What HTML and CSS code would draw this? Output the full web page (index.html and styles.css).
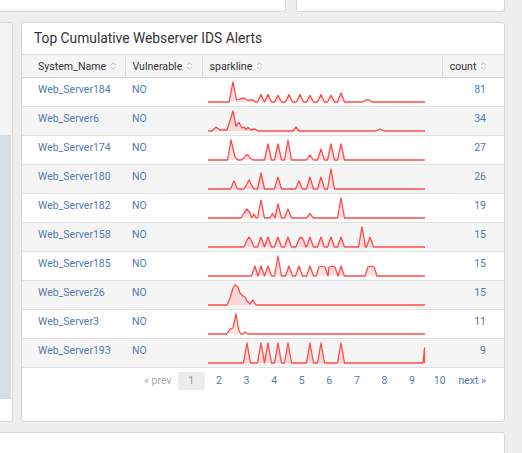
FILE: index.html
```html
<!DOCTYPE html>
<html>
<head>
<meta charset="utf-8">
<link rel="stylesheet" href="styles.css">
</head>
<body>
<div class="top-row">
  <div class="panel top-a"></div>
  <div class="panel top-b"></div>
</div>
<div class="mid-row">
  <div class="panel side">
    <div class="side-a"></div>
    <div class="side-b"></div>
  </div>
  <div class="panel main">
    <h2 class="title">Top Cumulative Webserver IDS Alerts</h2>
    <table class="grid">
      <colgroup><col class="c1"><col class="c2"><col class="c3"><col class="c4"></colgroup>
      <thead>
        <tr>
          <th class="first">System_Name <svg class="sort" viewBox="0 0 7 10"><path d="M1.2 4 L3.5 1.6 L5.8 4 M1.2 6 L3.5 8.4 L5.8 6"/></svg></th>
          <th>Vulnerable <svg class="sort" viewBox="0 0 7 10"><path d="M1.2 4 L3.5 1.6 L5.8 4 M1.2 6 L3.5 8.4 L5.8 6"/></svg></th>
          <th>sparkline <svg class="sort" viewBox="0 0 7 10"><path d="M1.2 4 L3.5 1.6 L5.8 4 M1.2 6 L3.5 8.4 L5.8 6"/></svg></th>
          <th class="num">count <svg class="sort" viewBox="0 0 7 10"><path d="M1.2 4 L3.5 1.6 L5.8 4 M1.2 6 L3.5 8.4 L5.8 6"/></svg></th>
        </tr>
      </thead>
      <tbody>
        <tr>
          <td class="first">Web_Server184</td><td>NO</td>
          <td class="spark"><svg viewBox="0 0 217 22"><polyline points="0,21 21,21 25,1 28.5,19 32,18 36,17 40,19.5 44,18.6 47.5,21 49.5,21 53,13.4 56.5,21 60,13.4 63.5,21 66.5,21 70,14.4 73.5,21 77.5,21 81,13.4 84.5,21 88.5,21 92,13.4 95.5,21 98.5,21 102,14.4 105.5,21 109.5,21 113,13.4 116.5,21 119.5,21 123,14.4 126.5,21 129.5,21 133,12 136.5,21 155,21 158,18.8 161,18.8 164,21 217,21"/></svg></td>
          <td class="num">81</td>
        </tr>
        <tr>
          <td class="first">Web_Server6</td><td>NO</td>
          <td class="spark"><svg viewBox="0 0 217 22"><polyline points="0,21 4,21 8,17 12,20 15,20 19,20 25,1 28,16 31,12.5 34,18 36,17 38,19.5 40,17.5 43,20 47,19 50,21 85,21 88,17 91,21 168,21 172,19 176,21 217,21"/></svg></td>
          <td class="num">34</td>
        </tr>
        <tr>
          <td class="first">Web_Server174</td><td>NO</td>
          <td class="spark"><svg viewBox="0 0 217 22"><polyline points="0,21 19.5,21 23,1 27,18 30,21 33,21 36,19 38,16 40,16 42,19 45,21 56.5,21 60,5 63.5,21 66.5,21 70,5 73.5,21 76.5,21 80,1 83.5,21 98.5,21 102,16 105.5,21 109.5,21 113,10 116.5,21 119.5,21 123,5 126.5,21 129.5,21 133,5 136.5,21 217,21"/></svg></td>
          <td class="num">27</td>
        </tr>
        <tr>
          <td class="first">Web_Server180</td><td>NO</td>
          <td class="spark"><svg viewBox="0 0 217 22"><polyline points="0,21 22.5,21 26,13 29.5,21 36,21 39,16 41,12 43,16 46,21 49.5,21 53,5 56.5,21 66.5,21 70,9 73.5,21 87.5,21 91,13 94.5,21 98.5,21 102,9 105.5,21 109.5,21 113,9 116.5,21 119.5,21 123,1 126.5,21 217,21"/></svg></td>
          <td class="num">26</td>
        </tr>
        <tr>
          <td class="first">Web_Server182</td><td>NO</td>
          <td class="spark"><svg viewBox="0 0 217 22"><polyline points="0,21 33,21 36,16 39,12 42,16 44,21 46,17 48,21 49.5,21 53,3 56.5,21 62,21 64.5,16.6 67,21 70,7 73.5,21 76.5,21 80,12 83.5,21 98.5,21 102,16.6 105.5,21 129.5,21 133,1 136.5,21 217,21"/></svg></td>
          <td class="num">19</td>
        </tr>
        <tr>
          <td class="first">Web_Server158</td><td>NO</td>
          <td class="spark"><svg viewBox="0 0 217 22"><polyline points="0,21 36,21 39,14 41,11 43,14 46,21 49.5,21 53,11 56.5,21 60,11 63.5,21 66.5,21 70,11 73.5,21 76.5,21 80,11 83.5,21 88,21 91,13 93,11 95,13 98,21 98.5,21 102,11 105.5,21 109.5,21 113,11 116.5,21 119.5,21 123,11 126.5,21 129.5,21 133,11 136.5,21 150.5,21 154,1 157.5,21 158.5,21 162,11 165.5,21 217,21"/></svg></td>
          <td class="num">15</td>
        </tr>
        <tr>
          <td class="first">Web_Server185</td><td>NO</td>
          <td class="spark"><svg viewBox="0 0 217 22"><polyline points="0,21 43.5,21 47,11 50,21 53,11 56.5,21 60,11 63.5,21 66.5,21 70,1 73.5,21 77.5,21 81,11 84.5,21 87.5,21 91,11 94.5,21 98.5,21 102,11 105.5,21 108,21 111,12 114,11 117,12 120,21 121,12 124,11 127,12 130,21 133,11 136.5,21 157,21 160,12 163,11 166,12 169,21 217,21"/></svg></td>
          <td class="num">15</td>
        </tr>
        <tr>
          <td class="first">Web_Server26</td><td>NO</td>
          <td class="spark"><svg viewBox="0 0 217 22"><polyline points="0,21 19,21 22,14 25,4 27,1 30,3 32,9 35,12 37,13 39,17 41,19 42,20 45,16 48,21 217,21"/></svg></td>
          <td class="num">15</td>
        </tr>
        <tr>
          <td class="first">Web_Server3</td><td>NO</td>
          <td class="spark"><svg viewBox="0 0 217 22"><polyline points="0,21 19,21 22,16 25,15 28,1 31,18 33,21 35,21 37,19 40,21 217,21"/></svg></td>
          <td class="num">11</td>
        </tr>
        <tr>
          <td class="first">Web_Server193</td><td>NO</td>
          <td class="spark"><svg viewBox="0 0 217 22"><polyline points="0,21 35.5,21 39,1 42.5,21 49.5,21 53,1 56.5,21 60,1 63.5,21 66.5,21 70,1 73.5,21 76.5,21 80,1 83.5,21 98.5,21 102,1 105.5,21 109.5,21 113,1 116.5,21 129.5,21 133,1 136.5,21 215,21 216.5,6 216.5,21"/></svg></td>
          <td class="num">9</td>
        </tr>
      </tbody>
    </table>
    <div class="pager">
      <span class="prev">« prev</span>
      <span class="page active">1</span>
      <a class="page">2</a>
      <a class="page">3</a>
      <a class="page">4</a>
      <a class="page">5</a>
      <a class="page">6</a>
      <a class="page">7</a>
      <a class="page">8</a>
      <a class="page">9</a>
      <a class="page">10</a>
      <a class="next">next »</a>
    </div>
  </div>
</div>
<div class="bottom-row">
  <div class="panel bottom"></div>
</div>
</body>
</html>
```
FILE: styles.css
```css
* { box-sizing: border-box; }
html, body { margin: 0; padding: 0; }
body {
  width: 522px;
  height: 453px;
  overflow: hidden;
  background: #eeeeee;
  font-family: Roboto, "Liberation Sans", sans-serif;
  color: #333;
}
.panel {
  background: #fff;
  border: 1px solid #d8d8d8;
  border-radius: 3px;
}
.top-row {
  display: flex;
  gap: 10px;
  height: 12px;
  padding-right: 17px;
}
.top-a {
  flex: 0 0 286px;
  border-top: none;
  border-left: none;
  border-radius: 0 0 3px 0;
}
.top-b {
  flex: 1;
  border-top: none;
  border-radius: 0 0 3px 3px;
}
.mid-row {
  display: flex;
  gap: 8px;
  margin-top: 10px;
  height: 400px;
  padding-right: 17px;
}
.side {
  flex: 0 0 13px;
  border-left: none;
  border-radius: 0 3px 3px 0;
  display: flex;
  flex-direction: column;
  overflow: hidden;
}
.side-a {
  height: 112px;
  background: #f4f4f4;
}
.side-b {
  height: 264px;
  background: #d7dde5;
  width: 11px;
}
.main {
  flex: 1;
  display: flex;
  flex-direction: column;
}
.title {
  margin: 0;
  height: 31px;
  line-height: 31px;
  padding-left: 12px;
  font-size: 13.8px;
  font-weight: normal;
  color: #333;
}
.grid {
  width: 100%;
  border-collapse: collapse;
  table-layout: fixed;
  font-size: 10.5px;
}
.c1 { width: 103px; }
.c2 { width: 77px; }
.c3 { width: 240px; }
.grid th {
  height: 23px;
  padding: 0 0 0 7px;
  text-align: left;
  font-weight: normal;
  font-size: 10.6px;
  color: #333;
  background: #f5f5f5;
  border-top: 1px solid #dcdcdc;
  border-bottom: 1px solid #cfcfcf;
  border-right: 1px solid #dcdcdc;
  white-space: nowrap;
}
.grid th:last-child { border-right: none; }
.grid th.first { padding-left: 16px; }
.grid th.num { text-align: right; padding-right: 17px; }
.sort {
  width: 7px;
  height: 10px;
  vertical-align: -1px;
  margin-left: 1px;
}
.sort path {
  fill: none;
  stroke: #b5b5b5;
  stroke-width: 0.9;
}
.grid tbody tr { height: 29px; }
.grid tbody tr:nth-child(even) td { background: #f5f5f5; }
.grid td {
  padding: 4px 7px 0;
  vertical-align: top;
  line-height: 15px;
  color: #5379af;
  border-bottom: 1px solid #e2e2e2;
  white-space: nowrap;
}
.grid td.first { padding-left: 16px; }
.grid td.num { text-align: right; padding-right: 18px; }
.grid td.spark { padding: 3px 0 0 6px; }
.spark svg {
  display: block;
  width: 217px;
  height: 22px;
  overflow: visible;
}
.spark polyline {
  fill: rgba(255, 90, 90, 0.18);
  stroke: #ff4a4a;
  stroke-width: 1.3;
  stroke-linejoin: round;
}
.pager {
  display: flex;
  justify-content: flex-end;
  margin-top: 4px;
  padding-right: 18px;
  font-size: 10.5px;
  line-height: 18px;
}
.pager .page {
  width: 27.6px;
  text-align: center;
  color: #5379af;
  border-radius: 2px;
}
.pager .prev { color: #aaa; padding-right: 6px; }
.pager .next { color: #5379af; padding-left: 5px; }
.pager .active { color: #999; background: #ececec; }
.bottom-row {
  margin-top: 10px;
  padding-right: 17px;
}
.bottom {
  height: 40px;
  border-left: none;
  border-radius: 0 3px 0 0;
}
```
